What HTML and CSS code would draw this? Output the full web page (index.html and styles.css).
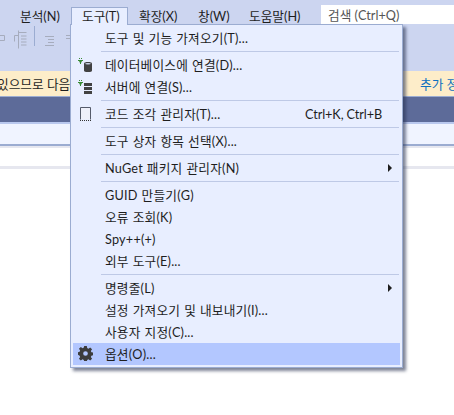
FILE: index.html
```html
<!DOCTYPE html>
<html lang="ko">
<head>
<meta charset="utf-8">
<title>도구 메뉴</title>
<link rel="stylesheet" href="styles.css">
</head>
<body>
<div class="app">
  <header class="menubar">
    <span class="mi first">분석(N)</span>
    <span class="mi open">도구(T)</span>
    <span class="mi ext">확장(X)</span>
    <span class="mi win">창(W)</span>
    <span class="mi help">도움말(H)</span>
    <span class="search">검색 (Ctrl+Q)</span>
  </header>
  <div class="toolbar">
    <svg class="tools" width="70" height="46" viewBox="0 0 70 46">
      <g fill="none" stroke="#a6acbd">
        <path d="M0 10.500h4.500v5H0"/>
        <path d="M14.500 16.500v-6h4M18.500 5.500v18M18.500 7.500h8M21 11h5.500M21 14h5.500M21 17h5.500M21 20h5.500"/>
        <path d="M45 11.500h9M48 14.500h6M48 17.500h6M45 20.500h9"/>
        <path d="M66 10.500h4M66 13.500h4"/>
      </g>
      <path d="M34.500 11v20" stroke="#9bacd1" transform="translate(0 -10)"/>
    </svg>
  </div>
  <div class="notice"><span class="notice-left">있으므로 다음</span><span class="notice-right">추가 정</span></div>
  <div class="darkband"></div>
  <div class="strip"></div>
  <div class="strip2"></div>
  <div class="blank"></div>
  <div class="strip3"></div>
</div>

<nav class="menu">
  <div class="row"><span class="label">도구 및 기능 가져오기(T)...</span></div>
  <div class="sep"></div>
  <div class="row">
    <svg class="icon" viewBox="0 0 16 16"><path d="M2 0h1v1H2zM4 0h1v1H4z" fill="#388a34"/><path d="M1 2h5v1H5L4 5v1H3V5L2 3H1z" fill="#388a34"/><path d="M7 5.500C7 4.500 8.500 4 11 4s4 .5 4 1.500v7c0 1-1.500 1.500-4 1.500s-4-.5-4-1.500z" fill="#424242"/><ellipse cx="11" cy="5.800" rx="2.800" ry=".8" fill="#cfd6ea"/></svg>
    <span class="label">데이터베이스에 연결(D)...</span>
  </div>
  <div class="row">
    <svg class="icon" viewBox="0 0 16 16"><path d="M2 0h1v1H2zM4 0h1v1H4z" fill="#388a34"/><path d="M1 2h5v1H5L4 5v1H3V5L2 3H1z" fill="#388a34"/><path d="M7 3h8v3H7zM7 7h8v3H7zM7 11h8v3H7z" fill="#424242"/></svg>
    <span class="label">서버에 연결(S)...</span>
  </div>
  <div class="sep"></div>
  <div class="row">
    <svg class="icon" viewBox="0 0 16 16"><path d="M3.500 12.500V.5h10v12" fill="#eef0fa" stroke="#555b6b"/><path d="M3 13.500h11" stroke="#333" stroke-dasharray="1 1"/></svg>
    <span class="label">코드 조각 관리자(T)...</span><span class="keys">Ctrl+K, Ctrl+B</span>
  </div>
  <div class="sep"></div>
  <div class="row"><span class="label">도구 상자 항목 선택(X)...</span></div>
  <div class="sep"></div>
  <div class="row"><span class="label">NuGet 패키지 관리자(N)</span><i class="arrow"></i></div>
  <div class="sep"></div>
  <div class="row"><span class="label">GUID 만들기(G)</span></div>
  <div class="row"><span class="label">오류 조회(K)</span></div>
  <div class="row"><span class="label">Spy++(+)</span></div>
  <div class="row"><span class="label">외부 도구(E)...</span></div>
  <div class="sep"></div>
  <div class="row"><span class="label">명령줄(L)</span><i class="arrow"></i></div>
  <div class="row"><span class="label">설정 가져오기 및 내보내기(I)...</span></div>
  <div class="row"><span class="label">사용자 지정(C)...</span></div>
  <div class="row active">
    <svg class="icon gear" viewBox="0 0 16 16"><path fill="#3c3c3c" fill-rule="evenodd" d="M6.600 0h2.800l.4 2.200 1.300.6 1.900-1.300 2 2-1.300 1.900.6 1.300 2.200.4v2.800l-2.200.4-.6 1.300 1.300 1.900-2 2-1.900-1.300-1.300.6-.4 2.200H6.600l-.4-2.200-1.300-.6-1.900 1.300-2-2 1.300-1.900-.6-1.300L0 9.400V6.600l1.700-.4.600-1.300L1 3l2-2 1.900 1.300 1.300-.6zM8 5.500a2.500 2.500 0 1 0 0 5 2.500 2.500 0 0 0 0-5z"/></svg>
    <span class="label">옵션(O)...</span>
  </div>
</nav>
</body>
</html>
```
FILE: styles.css
```css
html, body { margin: 0; height: 100%; background: #fff; overflow: hidden; }
body { font: 12.7px Lato, "Noto Sans CJK KR", sans-serif; color: #1e1e1e; position: relative; }
.app { display: flex; flex-direction: column; }
.menubar { height: 25px; background: #ccd5f0; display: flex; align-items: flex-start; flex: none; }
.mi { line-height: 18px; margin-top: 7px; white-space: nowrap; flex: none; }
.first { margin-left: 20px; width: 51px; }
.open { background: #e8eeff; width: 57px; height: 18px; box-sizing: border-box; padding-left: 10px; border: 1px solid #9bacd1; border-bottom: 0; line-height: 17px; position: relative; z-index: 2; }
.ext { margin-left: 11px; width: 59px; }
.win { width: 51px; }
.help { width: 72px; }
.search { width: 133px; height: 19px; line-height: 21px; margin-top: 5px; box-sizing: border-box; background: #fff; padding-left: 7px; color: #555; flex: none; white-space: nowrap; }
.toolbar { height: 46px; background: #ccd5f0; flex: none; }
.tools { display: block; }
.notice { height: 25px; background: #fdedc9; display: flex; justify-content: space-between; align-items: center; white-space: nowrap; overflow: hidden; flex: none; border-bottom: 1px solid #9bacd1; }
.notice-left { margin-left: -3px; }
.notice-right { color: #0e70c0; width: 34px; overflow: hidden; flex: none; }
.darkband { height: 25px; background: #5d6b99; flex: none; }
.strip { height: 20px; background: #f0f4ff; border-top: 2px solid #b9c8ee; flex: none; }
.strip2 { height: 2px; background: #e6e7ef; border-top: 2px solid #9bacd1; flex: none; }
.blank { height: 18px; flex: none; }
.strip3 { height: 3px; background: #e6e7ef; flex: none; }
.menu { position: absolute; left: 70px; top: 24px; width: 333px; height: 344px; box-sizing: border-box; background: #e8eeff; border: 1px solid #9bacd1; box-shadow: 3px 3px 3px rgba(40, 50, 80, .6); padding: 2px; display: flex; flex-direction: column; z-index: 1; }
.row { position: relative; height: 22px; line-height: 22px; display: flex; align-items: center; padding-left: 32px; padding-right: 8px; flex: none; white-space: nowrap; }
.label { flex: 1; letter-spacing: .2px; word-spacing: .5px; }
.keys { margin-right: 10px; letter-spacing: -.1px; }
.active { background: #b3c7ff; }
.sep { height: 1px; background: #bec9e6; margin: 2px 1px 2px 28px; flex: none; }
.icon { position: absolute; left: 4px; top: 4px; width: 16px; height: 16px; }
.gear { width: 15px; height: 15px; top: 3px; left: 5px; }
.arrow { width: 0; height: 0; border-left: 4px solid #1e1e1e; border-top: 4px solid transparent; border-bottom: 4px solid transparent; }
```
